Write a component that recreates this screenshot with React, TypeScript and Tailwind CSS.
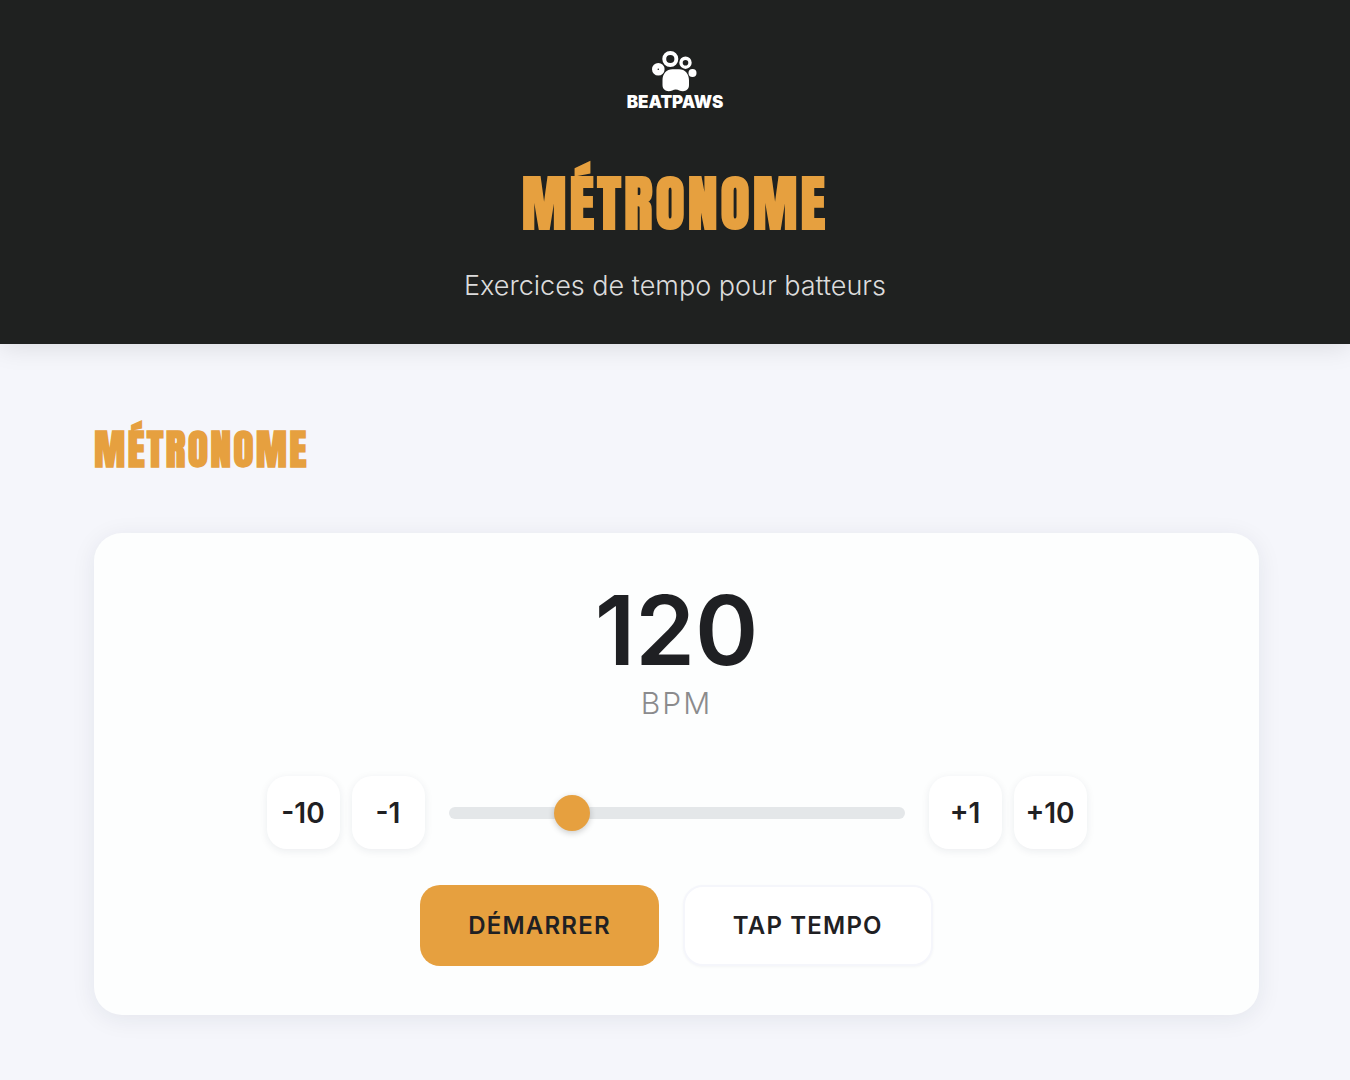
import { useEffect, useRef, useState } from "react";

const MIN_BPM = 40;
const MAX_BPM = 360;

function clamp(value: number) {
  return Math.min(MAX_BPM, Math.max(MIN_BPM, value));
}

function Logo() {
  return (
    <a href="#" aria-label="Beatpaws" className="flex flex-col items-center text-white">
      <svg width="46" height="42" viewBox="0 0 46 42" fill="currentColor" aria-hidden="true">
        <path
          fillRule="evenodd"
          d="M18.300 0a8 8 0 1 0 0 16a8 8 0 0 0 0-16zM18.300 3.900a4.100 4.100 0 1 1 0 8.200a4.100 4.100 0 0 1 0-8.200z"
        />
        <path
          fillRule="evenodd"
          d="M33.500 5.500a6.200 6.200 0 1 0 0 12.400a6.200 6.200 0 0 0 0-12.400zM33.500 8.900a2.800 2.800 0 1 1 0 5.600a2.800 2.800 0 0 1 0-5.600z"
        />
        <path
          fillRule="evenodd"
          d="M6.300 12a6.300 6.300 0 1 0 0 12.600a6.300 6.300 0 0 0 0-12.600zM6.300 17.500a.8.8 0 1 1 0 1.600a.8.8 0 0 1 0-1.600z"
        />
        <circle cx="40.500" cy="22" r="4" />
        <path d="M20.500 18.300h6.500c6 0 10 4.500 10 11v4.700c0 4-2.700 6.200-6 6.200c-3 0-4.500-1.800-7.200-1.800s-4.200 1.800-7.200 1.800c-3.300 0-6.100-2.200-6.100-6.200v-4.700c0-6.500 4-11 10-11z" />
      </svg>
      <span className="text-[17px] leading-[18px] font-black">BEATPAWS</span>
    </a>
  );
}

function StepButton({ step, onStep }: { step: number; onStep: (step: number) => void }) {
  return (
    <button
      type="button"
      onClick={() => onStep(step)}
      className="size-[73px] shrink-0 rounded-[20px] bg-white text-[28px] font-semibold shadow-[0_2px_8px_rgba(30,32,60,0.08)]"
    >
      {step > 0 ? `+${step}` : step}
    </button>
  );
}

export default function App() {
  const [bpm, setBpm] = useState(120);
  const [playing, setPlaying] = useState(false);
  const lastTap = useRef(0);

  // Joue un clic à chaque battement
  useEffect(() => {
    if (!playing) return;
    const ctx = new AudioContext();
    const id = setInterval(() => {
      const osc = ctx.createOscillator();
      osc.frequency.value = 1000;
      osc.connect(ctx.destination);
      osc.start();
      osc.stop(ctx.currentTime + 0.03);
    }, 60000 / bpm);
    return () => {
      clearInterval(id);
      ctx.close();
    };
  }, [playing, bpm]);

  function changeBpm(step: number) {
    setBpm((prev) => clamp(prev + step));
  }

  function tap() {
    const now = Date.now();
    const delta = now - lastTap.current;
    if (delta < 2000) setBpm(clamp(Math.round(60000 / delta)));
    lastTap.current = now;
  }

  return (
    <div className="min-h-screen bg-[#f5f6fb] font-['Inter',sans-serif] text-[#1f2023]">
      <header className="flex flex-col items-center bg-[#1f2120] px-6 pt-[51px] pb-[38px] shadow-[0_4px_24px_rgba(0,0,0,0.1)]">
        <Logo />
        <h1 className="mt-[49px] font-['Impact','Anton','Liberation_Sans_Narrow',sans-serif] text-[60px] leading-[88px] font-black tracking-wider text-[#e6a03f]">
          MÉTRONOME
        </h1>
        <p className="mt-[18px] text-[27px] leading-10 font-light text-[#dcdcdc]">
          Exercices de tempo pour batteurs
        </p>
      </header>

      <main className="pt-[74px] pr-[91px] pb-16 pl-[94px]">
        <h2 className="font-['Impact','Anton','Liberation_Sans_Narrow',sans-serif] text-[42px] leading-[64px] font-black tracking-wider text-[#e6a03f]">
          MÉTRONOME
        </h2>

        <section className="mt-[51px] flex flex-col items-center rounded-[28px] bg-[#fdfefe] px-12 pt-12 pb-[49px] shadow-[0_4px_24px_rgba(30,32,60,0.08)]">
          <output htmlFor="bpm" className="text-[96px] leading-[98px] font-semibold">
            {bpm}
          </output>
          <label htmlFor="bpm" className="mt-[6px] text-[30px] leading-9 font-light tracking-[2px] text-[#8b8b8d]">
            BPM
          </label>

          <div className="mt-[55px] flex w-full max-w-[820px] items-center gap-6">
            <div className="flex gap-3">
              <StepButton step={-10} onStep={changeBpm} />
              <StepButton step={-1} onStep={changeBpm} />
            </div>
            <input
              id="bpm"
              type="range"
              min={MIN_BPM}
              max={MAX_BPM}
              value={bpm}
              onChange={(e) => setBpm(Number(e.target.value))}
              className="h-3 min-w-0 flex-1 cursor-pointer appearance-none rounded-full bg-[#e4e7e9] [&::-webkit-slider-thumb]:size-9 [&::-webkit-slider-thumb]:appearance-none [&::-webkit-slider-thumb]:rounded-full [&::-webkit-slider-thumb]:bg-[#e6a03f] [&::-webkit-slider-thumb]:shadow-[0_2px_6px_rgba(0,0,0,0.2)]"
            />
            <div className="flex gap-3">
              <StepButton step={1} onStep={changeBpm} />
              <StepButton step={10} onStep={changeBpm} />
            </div>
          </div>

          <div className="mt-9 flex gap-6">
            <button
              type="button"
              onClick={() => setPlaying(!playing)}
              className="rounded-[20px] bg-[#e6a03f] px-12 py-6 text-[24px] leading-[33px] font-semibold tracking-wider"
            >
              {playing ? "ARRÊTER" : "DÉMARRER"}
            </button>
            <button
              type="button"
              onClick={tap}
              className="rounded-[20px] border-2 border-[#f5f6fb] bg-white px-12 py-5 text-[24px] leading-[33px] font-semibold tracking-wider shadow-[0_1px_3px_rgba(30,32,60,0.04)]"
            >
              TAP TEMPO
            </button>
          </div>
        </section>
      </main>
    </div>
  );
}
